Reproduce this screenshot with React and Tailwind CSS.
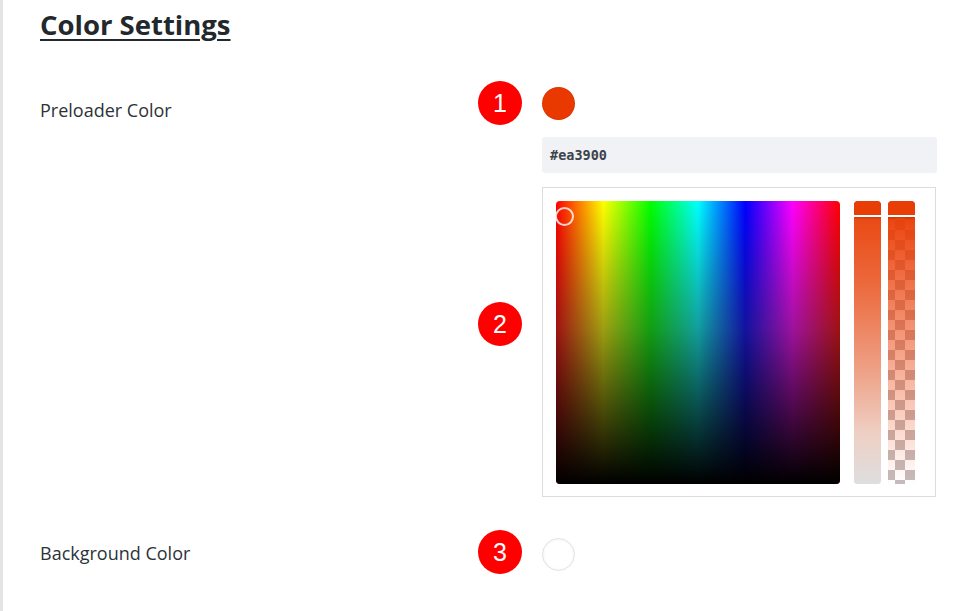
import React from 'react';

function Badge({ n, className = '' }) {
  return (
    <div
      className={`flex h-[44px] w-[44px] items-center justify-center rounded-full bg-[#ff0000] text-[25px] leading-none text-white ${className}`}
      style={{ fontFamily: '"Liberation Sans", Arial, sans-serif' }}
    >
      {n}
    </div>
  );
}

function Slider({ checker }) {
  return (
    <div className="relative h-[283px] w-[27px] overflow-hidden rounded-[4px] shadow-[inset_0_0_2px_rgba(0,0,0,0.25)]">
      {checker && (
        <div className="absolute inset-0 bg-[repeating-conic-gradient(#c4bcbc_0%_25%,#ffffff_0%_50%)] bg-[length:20px_20px] bg-[position:-3px_-1px]" />
      )}
      {checker ? (
        <div className="absolute inset-0 bg-[linear-gradient(to_bottom,rgba(234,57,0,1)_0%,rgba(234,57,0,0.55)_45%,rgba(234,57,0,0)_100%)]" />
      ) : (
        <div className="absolute inset-0 bg-[linear-gradient(to_bottom,#e9420a_0%,#ec6a3e_30%,#eea58c_62%,#efcfc4_82%,#dedede_100%)]" />
      )}
      <div className="absolute inset-x-0 top-0 h-[16px] rounded-t-[4px] border-b-2 border-white bg-[#e83d05] shadow-[0_1px_2px_rgba(0,0,0,0.2)]" />
    </div>
  );
}

export default function App() {
  return (
    <div
      className="min-h-[611px] w-[960px] border-l-[3px] border-[#e4e4e4] bg-white pl-[37px] text-[#2c3338]"
      style={{ fontFamily: '"Open Sans", "Noto Sans", sans-serif' }}
    >
      <h2 className="pt-[8px] text-[27.5px] font-bold leading-[1.2] text-[#23282d] underline decoration-2 underline-offset-[4px]">
        Color Settings
      </h2>

      <div className="mt-[40px] grid grid-cols-[438px_44px_1fr] gap-y-[12px]">
        {/* row 1 */}
        <div className="mt-[17px] self-start text-[18px] leading-[24px]">Preloader Color</div>
        <Badge n="1" />
        <div className="ml-[20px] flex items-center">
          <div className="h-[33px] w-[33px] rounded-full bg-[#ea3900] shadow-[inset_0_0_0_1px_rgba(0,0,0,0.06)]" />
        </div>

        {/* row 2 */}
        <div />
        <Badge n="2" className="mt-[165px] self-start" />
        <div className="ml-[20px] flex flex-col gap-[14px]">
          <div
            className="flex h-[36px] w-[395px] items-center rounded-[3px] bg-[#f0f2f6] px-[8px] text-[13.5px] font-bold text-[#3c434a]"
            style={{ fontFamily: '"DejaVu Sans Mono", "Liberation Mono", monospace' }}
          >
            #ea3900
          </div>
          <div className="flex h-[310px] w-[394px] gap-[14px] border border-[#dcdcde] p-[13px]">
            <div className="relative h-[283px] w-[284px] overflow-hidden rounded-[4px] bg-[linear-gradient(to_right,#ff0000,#ffff00,#00ff00,#00ffff,#0000ff,#ff00ff,#ff0000)]">
              <div className="absolute inset-0 bg-[linear-gradient(to_bottom,rgba(0,0,0,0)_0%,rgba(40,40,40,0.45)_45%,#000000_100%)]" />
              <div className="absolute left-[-1px] top-[6px] h-[19px] w-[19px] rounded-full border-2 border-[rgba(255,255,255,0.8)]" />
            </div>
            <div className="flex gap-[7px]">
              <Slider />
              <Slider checker />
            </div>
          </div>
        </div>

        {/* row 3 */}
        <div className="mt-[32px] self-start text-[18px] leading-[24px]">Background Color</div>
        <Badge n="3" className="mt-[21px]" />
        <div className="ml-[20px] mt-[29px] flex items-start">
          <div className="h-[33px] w-[33px] rounded-full border border-[#e2e2e2] bg-white shadow-[inset_0_0_3px_rgba(0,0,0,0.08)]" />
        </div>
      </div>
    </div>
  );
}
